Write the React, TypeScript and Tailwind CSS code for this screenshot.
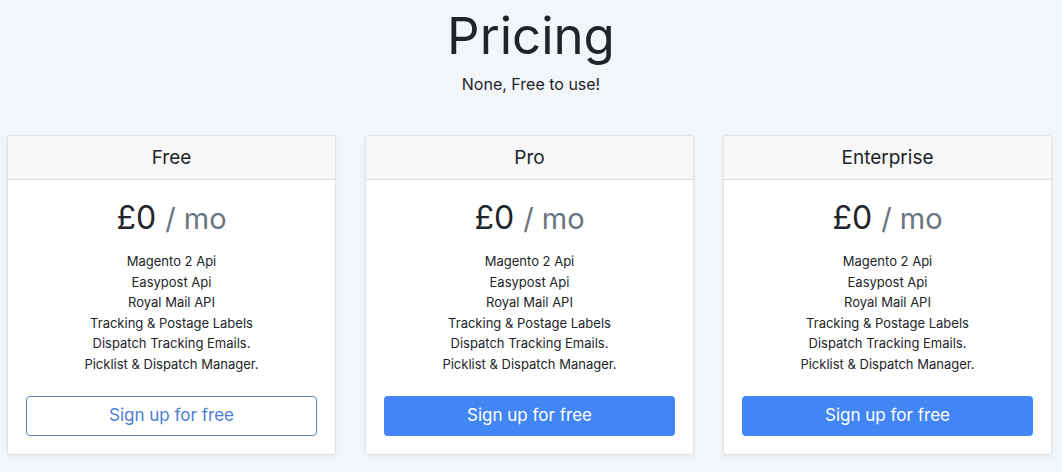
import React from 'react';

const features = [
  'Magento 2 Api',
  'Easypost Api',
  'Royal Mail API',
  'Tracking & Postage Labels',
  'Dispatch Tracking Emails.',
  'Picklist & Dispatch Manager.',
];

const plans = [
  { name: 'Free', outline: true },
  { name: 'Pro', outline: false },
  { name: 'Enterprise', outline: false },
];

function PlanCard({ name, outline }: { name: string; outline: boolean }) {
  return (
    <div className="bg-white border border-[#dfe2e5] rounded-[3px] shadow-[0_2px_6px_rgba(0,0,0,0.05)] flex flex-col">
      {/* Header */}
      <div className="h-[44px] pt-[2px] bg-[#f7f7f7] border-b border-[#dcdcdc] flex items-center justify-center">
        <h4 className="text-[19px] text-[#212529] font-normal">{name}</h4>
      </div>

      {/* Body */}
      <div className="px-[18px] pt-[16px] pb-[18px] flex flex-col items-center">
        <div className="text-[32px] leading-[44px] text-[#212529]">
          £0 <span className="text-[#6c757d] text-[29px]">/ mo</span>
        </div>
        <ul className="mt-[10px] text-[13px] leading-[20.6px] text-[#212529] text-center">
          {features.map((f) => (
            <li key={f}>{f}</li>
          ))}
        </ul>
        {outline ? (
          <button className="mt-[21px] w-full h-[40px] rounded-[4px] border border-[#5b87bf] text-[#4a80d6] text-[17px] bg-white">
            Sign up for free
          </button>
        ) : (
          <button className="mt-[21px] w-full h-[40px] rounded-[4px] bg-[#4285f4] text-white text-[17px]">
            Sign up for free
          </button>
        )}
      </div>
    </div>
  );
}

export default function App() {
  return (
    <div className="w-[1062px] h-[472px] bg-[#f3f6f9] font-['Inter',sans-serif] overflow-hidden">
      <div className="text-center">
        <h1 className="pt-[10px] text-[51px] leading-none font-normal text-[#212529]">Pricing</h1>
        <p className="mt-[11px] text-[16px] text-[#212529]">None, Free to use!</p>
      </div>

      <div className="mt-[39px] pl-[7px] pr-[10px] grid grid-cols-3 gap-[29px]">
        {plans.map((p) => (
          <PlanCard key={p.name} name={p.name} outline={p.outline} />
        ))}
      </div>
    </div>
  );
}
